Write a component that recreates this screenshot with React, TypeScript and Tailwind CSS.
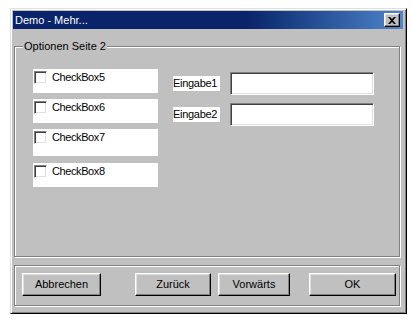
import React from 'react'

const font = { fontFamily: '"Liberation Sans", Arial, sans-serif' }

// raised 3d edge used for buttons and the close box
const raised =
  'border border-t-white border-l-white border-r-black border-b-black shadow-[inset_-1px_-1px_0_#808080,inset_1px_1px_0_#dfdfdf]'

// sunken edge used for text fields and check boxes
const sunken =
  'border border-t-[#808080] border-l-[#808080] border-r-white border-b-white shadow-[inset_1px_1px_0_#404040,inset_-1px_-1px_0_#dfdfdf]'

const CheckRow = ({ label, h }: { label: string; h: string }) => (
  <div className={`bg-white flex items-start pl-[1px] pt-[2px] ${h}`}>
    <span className={`w-[13px] h-[13px] bg-white ${sunken}`} />
    <span className="ml-[5px] text-[11px] leading-[13px] tracking-[-0.4px] text-black">{label}</span>
  </div>
)

const Field = ({ label }: { label: string }) => (
  <div className="flex items-end h-[23px]">
    <div className="w-[57px] mb-[1px]">
      <span className="bg-white text-[11px] leading-[15px] tracking-[-0.3px] pr-[3px] inline-block text-black">
        {label}
      </span>
    </div>
    <div className={`w-[144px] h-[23px] bg-white ${sunken}`} />
  </div>
)

const Btn = ({ label, w, className = '' }: { label: string; w: string; className?: string }) => (
  <button
    className={`${w} h-[23px] bg-[#c0c0c0] text-[11px] text-black flex items-center justify-center ${raised} ${className}`}
  >
    {label}
  </button>
)

export default function App() {
  return (
    <div className="bg-white w-[411px] h-[319px] pt-[8px] pl-[10px]" style={font}>
      <div className="w-[397px] h-[306px] bg-[#c0c0c0] p-[2px] border border-t-[#dfdfdf] border-l-[#dfdfdf] border-r-black border-b-black shadow-[inset_1px_1px_0_#fff,inset_-1px_-1px_0_#808080] flex flex-col">
        {/* title bar */}
        <div className="h-[18px] mr-[1px] flex items-center justify-between pl-[2px] pr-[3px] bg-gradient-to-r from-[#0a246a] via-[#0a246a] via-60% to-[#4f86cc]">
          <span className="text-white text-[11px] leading-none">Demo - Mehr...</span>
          <div className={`w-[16px] h-[14px] bg-[#c0c0c0] flex items-center justify-center ${raised}`}>
            <svg width="8" height="7" viewBox="0 0 8 7">
              <path d="M0 0h2l2 2 2-2h2L5 3.5 8 7H6L4 5 2 7H0l3-3.5z" fill="#000" />
            </svg>
          </div>
        </div>

        {/* options group */}
        <div className="relative ml-[1px] mt-[17px] w-[386px] h-[211px] border border-[#808080] shadow-[inset_1px_1px_0_#fff,1px_1px_0_#fff]">
          <span className="absolute left-[8px] top-[-8px] bg-[#c0c0c0] px-[1px] text-[11px] leading-[14px] text-black">
            Optionen Seite 2
          </span>
          <div className="flex pl-[18px] pt-[22px]">
            <div className="w-[125px] flex flex-col">
              <CheckRow label="CheckBox5" h="h-[24px]" />
              <div className="h-[6px]" />
              <CheckRow label="CheckBox6" h="h-[24px]" />
              <div className="h-[6px]" />
              <CheckRow label="CheckBox7" h="h-[27px]" />
              <div className="h-[7px]" />
              <CheckRow label="CheckBox8" h="h-[24px]" />
            </div>
            <div className="ml-[15px] mt-[3px] flex flex-col gap-[8px]">
              <Field label="Eingabe1" />
              <Field label="Eingabe2" />
            </div>
          </div>
        </div>

        {/* button group */}
        <div className="ml-[1px] mt-[8px] w-[386px] h-[41px] border border-[#808080] shadow-[inset_1px_1px_0_#fff,1px_1px_0_#fff] flex items-start pt-[7px] pl-[7px]">
          <Btn label="Abbrechen" w="w-[79px]" />
          <Btn label="Zurück" w="w-[76px]" className="ml-[34px]" />
          <Btn label="Vorwärts" w="w-[72px]" className="ml-[7px]" />
          <Btn label="OK" w="w-[87px]" className="ml-[19px]" />
        </div>
      </div>
    </div>
  )
}
